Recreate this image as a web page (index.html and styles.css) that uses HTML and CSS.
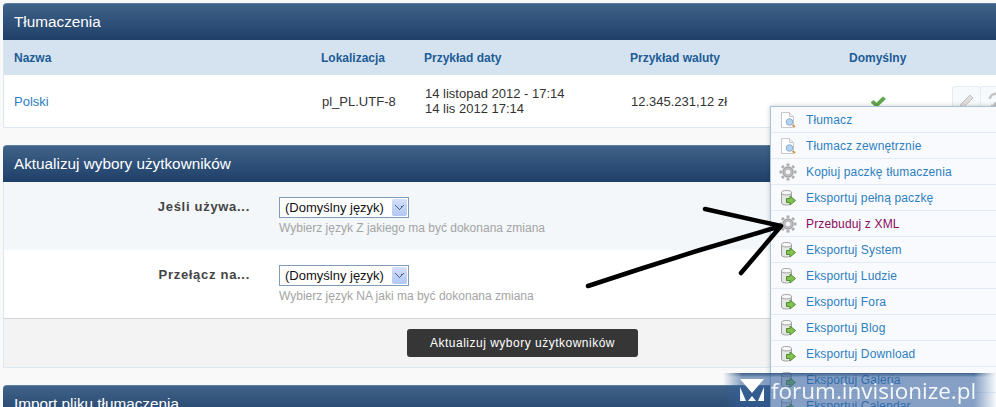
FILE: index.html
```html
<!DOCTYPE html>
<html lang="pl">
<head>
    <meta charset="UTF-8">
    <meta name="viewport" content="width=device-width, initial-scale=1.0">
    <title>Tłumaczenia</title>
    <link rel="stylesheet" href="styles.css">
</head>
<body>
    <svg width="0" height="0" class="defs">
        <defs>
            <symbol id="ico-page" viewBox="0 0 16 16">
                <path d="M1.500 .5h8l4 4v11h-12z" fill="#fff" stroke="#c8c8c8"/>
                <path d="M9.500 .5v4h4" fill="#eee" stroke="#c8c8c8"/>
                <circle cx="9.500" cy="10" r="3.300" fill="#b5d3f0" stroke="#86aed6"/>
                <path d="M12.500 13l2.500 2" stroke="#d9934a" stroke-width="2"/>
            </symbol>
            <symbol id="ico-gear" viewBox="0 0 16 16">
                <path d="M8 2.500v-2M8 15.500v-2M2.500 8h-2M15.500 8h-2M4.100 4.100L2.700 2.700M13.300 13.300l-1.400-1.400M4.100 11.900l-1.400 1.400M13.300 2.700l-1.400 1.400" stroke="#a8a8a8" stroke-width="2.600"/>
                <circle cx="8" cy="8" r="4.600" fill="#bcbcbc" stroke="#a0a0a0"/>
                <circle cx="8" cy="8" r="2.100" fill="#f5f5f5"/>
            </symbol>
            <symbol id="ico-export" viewBox="0 0 16 16">
                <path d="M1.500 2.500V13c0 1 2 2 5 2s5-1 5-2V2.500z" fill="#e6e6e6" stroke="#a0a0a0"/>
                <ellipse cx="6.500" cy="2.700" rx="5" ry="2.200" fill="#f8f8f8" stroke="#a0a0a0"/>
                <path d="M6.500 8.500H10V6l5.500 4.500L10 15v-2.500H6.500z" fill="#86c052" stroke="#4a8f2a"/>
            </symbol>
        </defs>
    </svg>

    <div class="block">
        <h2 class="block-title">Tłumaczenia</h2>
        <table class="lang-table">
            <thead>
                <tr>
                    <th class="col-name">Nazwa</th>
                    <th class="col-locale">Lokalizacja</th>
                    <th class="col-date">Przykład daty</th>
                    <th class="col-money">Przykład waluty</th>
                    <th class="col-default">Domyślny</th>
                    <th class="col-actions"></th>
                </tr>
            </thead>
            <tbody>
                <tr>
                    <td><a href="#" class="link">Polski</a></td>
                    <td>pl_PL.UTF-8</td>
                    <td>14 listopad 2012 - 17:14<br>14 lis 2012 17:14</td>
                    <td>12.345.231,12 zł</td>
                    <td class="center">
                        <svg class="check" width="16" height="12" viewBox="0 0 16 12"><path d="M1 6.500l2.500-2 3 2.500L13 .8 15.500 3 6.500 11.500z" fill="#5fa84a" stroke="#4c9438" stroke-width=".6"/></svg>
                    </td>
                    <td>
                        <div class="row-actions">
                            <span class="row-btn">
                                <svg width="18" height="18" viewBox="0 0 18 18"><path d="M2 16l1-4 9-9 3 3-9 9z" fill="#ddd" stroke="#c4c4c4"/></svg>
                            </span>
                            <span class="row-btn">
                                <svg width="18" height="18" viewBox="0 0 18 18"><path d="M4 7a5 5 0 0 1 10 0M14 7l-6 6M5 14h8" fill="none" stroke="#c4c4c4" stroke-width="2.500"/></svg>
                            </span>
                        </div>
                    </td>
                </tr>
            </tbody>
        </table>
    </div>

    <div class="block">
        <h2 class="block-title">Aktualizuj wybory użytkowników</h2>
        <div class="form-row tinted">
            <strong class="form-label">Jeśli używa...</strong>
            <div>
                <span class="fake-select">(Domyślny język)<i class="select-arrow"></i></span>
                <div class="hint">Wybierz język Z jakiego ma być dokonana zmiana</div>
            </div>
        </div>
        <div class="form-row">
            <strong class="form-label">Przełącz na...</strong>
            <div>
                <span class="fake-select">(Domyślny język)<i class="select-arrow"></i></span>
                <div class="hint">Wybierz język NA jaki ma być dokonana zmiana</div>
            </div>
        </div>
        <div class="submit-bar">
            <button class="btn-dark">Aktualizuj wybory użytkowników</button>
        </div>
    </div>

    <div class="block">
        <h2 class="block-title">Import pliku tłumaczenia</h2>
    </div>

    <ul class="menu">
        <li><svg class="menu-ico"><use href="#ico-page"/></svg><a href="#">Tłumacz</a></li>
        <li><svg class="menu-ico"><use href="#ico-page"/></svg><a href="#">Tłumacz zewnętrznie</a></li>
        <li><svg class="menu-ico big"><use href="#ico-gear"/></svg><a href="#">Kopiuj paczkę tłumaczenia</a></li>
        <li><svg class="menu-ico"><use href="#ico-export"/></svg><a href="#">Eksportuj pełną paczkę</a></li>
        <li><svg class="menu-ico big"><use href="#ico-gear"/></svg><a href="#" class="hover">Przebuduj z XML</a></li>
        <li><svg class="menu-ico"><use href="#ico-export"/></svg><a href="#">Eksportuj System</a></li>
        <li><svg class="menu-ico"><use href="#ico-export"/></svg><a href="#">Eksportuj Ludzie</a></li>
        <li><svg class="menu-ico"><use href="#ico-export"/></svg><a href="#">Eksportuj Fora</a></li>
        <li><svg class="menu-ico"><use href="#ico-export"/></svg><a href="#">Eksportuj Blog</a></li>
        <li><svg class="menu-ico"><use href="#ico-export"/></svg><a href="#">Eksportuj Download</a></li>
        <li><svg class="menu-ico"><use href="#ico-export"/></svg><a href="#">Eksportuj Galeria</a></li>
        <li><svg class="menu-ico"><use href="#ico-export"/></svg><a href="#">Eksportuj Calendar</a></li>
    </ul>

    <!-- hand drawn arrow on top of the screenshot -->
    <svg class="arrow" width="996" height="407" viewBox="0 0 996 407">
        <path d="M588 286L640 269 700 250 781 226M705 209L781 226M741 273L781 226" fill="none" stroke="#000" stroke-width="4.500" stroke-linecap="round" stroke-linejoin="round"/>
    </svg>

    <div class="watermark">
        <svg width="24" height="22" viewBox="0 0 24 22"><path d="M0 0h24L12 14zM0 8l6 14H0zM24 8l-6 14h6zM8 22l4-5 4 5z" fill="#fff"/></svg>
        <span class="watermark-text">forum.invisionize.pl</span>
    </div>
</body>
</html>
```
FILE: styles.css
```css
html, body {
    height: 407px;
    overflow: hidden;
}
body {
    position: relative;
    margin: 0;
    padding: 3px 0 0 3px;
    box-sizing: border-box;
    font-family: "Liberation Sans", Arial, sans-serif;
    font-size: 13px;
    color: #333;
    background-color: #f9f9f9;
}
.defs {
    position: absolute;
}
.block {
    margin-bottom: 17px;
    margin-right: -3px;
    background-color: #fff;
    border-left: 1px solid #dde7f1;
    border-bottom: 1px solid #dde7f1;
    border-radius: 4px 0 0 0;
}
.block-title {
    margin: 0 0 0 -1px;
    padding: 0 11px;
    height: 37px;
    line-height: 36px;
    font-size: 15.300px;
    font-weight: normal;
    color: #fff;
    background: linear-gradient(#3f6288, #1f3f69);
    border-top: 1px solid #5b7da0;
    box-sizing: border-box;
    border-radius: 4px 0 0 0;
}
.lang-table {
    width: 993px;
    border-collapse: collapse;
    table-layout: fixed;
}
.lang-table th {
    height: 35px;
    padding: 0 10px;
    text-align: left;
    font-size: 12px;
    color: #1d5c96;
    background-color: #d5e3f0;
}
.lang-table td {
    height: 52px;
    padding: 0 10px 0 11px;
    line-height: 15px;
}
.lang-table td:first-child {
    padding-left: 10px;
}
.col-name { width: 287px; }
.col-locale { width: 83px; }
.col-date { width: 186px; }
.col-money { width: 190px; }
.col-default { width: 90px; }
.lang-table th.col-default { padding-left: 19px; }
.center {
    text-align: center;
}
.check {
    position: relative;
    left: -12px;
    top: 2px;
}
.link, .menu a {
    color: #2d7fc1;
    text-decoration: none;
}
.row-actions {
    display: flex;
    margin-left: -8px;
}
.row-btn {
    display: flex;
    align-items: center;
    justify-content: center;
    width: 29px;
    height: 30px;
    flex: none;
    border: 1px solid #e4ecf4;
    border-radius: 3px;
    background-color: #f7fafc;
    box-sizing: border-box;
    margin-right: -1px;
}
.form-row {
    display: flex;
    height: 68px;
    padding-top: 15px;
    box-sizing: border-box;
}
.tinted {
    background-color: #f3f7fa;
}
.form-label {
    width: 275px;
    padding-right: 29px;
    box-sizing: border-box;
    text-align: right;
    font-size: 13px;
    letter-spacing: .7px;
    color: #444;
    padding-top: 2px;
}
.fake-select {
    display: flex;
    align-items: center;
    justify-content: space-between;
    width: 130px;
    height: 21px;
    padding: 0 1px 0 5px;
    box-sizing: border-box;
    border: 1px solid #7f9db9;
    background-color: #fff;
    font-size: 13px;
    color: #111;
}
.select-arrow {
    display: block;
    width: 15px;
    height: 17px;
    border-radius: 2px;
    background:
        linear-gradient(45deg, transparent 44%, #4d6185 44%, #4d6185 60%, transparent 60%) 3px 6px / 5px 5px no-repeat,
        linear-gradient(-45deg, transparent 44%, #4d6185 44%, #4d6185 60%, transparent 60%) 7px 6px / 5px 5px no-repeat,
        linear-gradient(#d3dffa, #b2c7f2);
}
.hint {
    margin-top: 3px;
    font-size: 12px;
    color: #a4a4a4;
}
.submit-bar {
    display: flex;
    justify-content: center;
    height: 49px;
    padding-top: 10px;
    padding-left: 42px;
    box-sizing: border-box;
    border-top: 1px solid #d5d5d5;
    background-color: #f3f3f3;
}
.btn-dark {
    width: 231px;
    height: 28px;
    padding: 0;
    border: 0;
    border-radius: 3px;
    font-family: inherit;
    font-size: 12px;
    letter-spacing: .5px;
    color: #fff;
    background-color: #363636;
}
.menu {
    position: absolute;
    left: 770px;
    top: 106px;
    width: 240px;
    margin: 0;
    padding: 0;
    list-style: none;
    background-color: #f8fafd;
    border: 1px solid #a9c2da;
    box-shadow: 0 0 5px rgba(0, 0, 0, .2);
    font-size: 12px;
    letter-spacing: .15px;
}
.menu li {
    display: flex;
    align-items: center;
    height: 26px;
    box-sizing: border-box;
    padding-left: 9px;
    border-bottom: 1px solid #e2ebf5;
}
.menu-ico {
    width: 16px;
    height: 16px;
    margin-right: 10px;
    flex: none;
}
.menu-ico.big {
    width: 18px;
    height: 18px;
    margin: 0 9px 0 -1px;
}
.menu a.hover {
    color: #8c0a5c;
}
.arrow {
    position: absolute;
    left: 0;
    top: 0;
}
.watermark {
    position: absolute;
    left: 723px;
    top: 373px;
    width: 273px;
    height: 34px;
    display: flex;
    align-items: center;
    gap: 7px;
    padding: 0 0 0 17px;
    box-sizing: border-box;
    background:
        linear-gradient(rgba(40, 75, 120, .75), rgba(40, 75, 120, .3) 3px, transparent 4px),
        rgba(50, 95, 155, .58);
    -webkit-mask-image: linear-gradient(to right, transparent, #000 7%, #000 92%, transparent);
    mask-image: linear-gradient(to right, transparent, #000 7%, #000 92%, transparent);
}
.watermark-text {
    font-family: "Open Sans", sans-serif;
    font-size: 22.500px;
    color: #f4f7fb;
    white-space: nowrap;
}
```
